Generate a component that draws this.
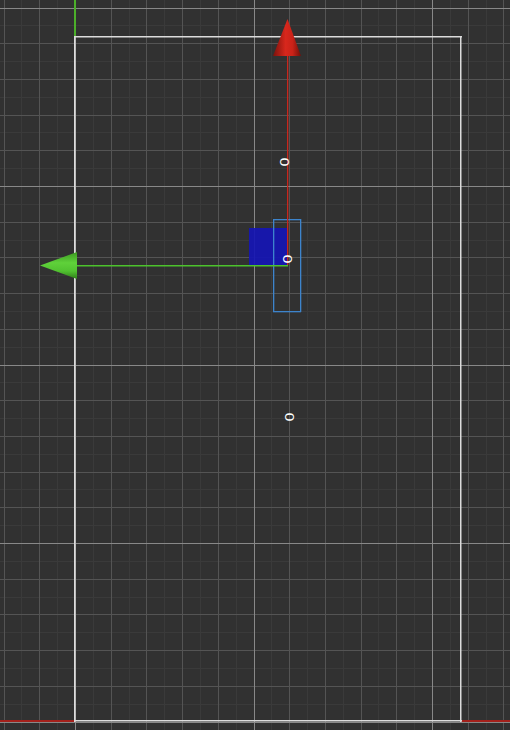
import React from 'react';

const W = 510;
const H = 730;
const STEP = 17.85;
const ORIGIN_X = 75;
const ORIGIN_Y = 7.5;

type GridLine = { pos: number; level: number };

// grid levels: 0 = faint, 1 = every second line, 2 = major (every tenth)
const buildLines = (origin: number, max: number): GridLine[] => {
  const lines: GridLine[] = [];
  const start = Math.ceil((0 - origin) / STEP);
  const end = Math.floor((max - origin) / STEP);
  for (let k = start; k <= end; k++) {
    const idx = ((k % 10) + 10) % 10;
    const level = idx === 0 ? 2 : idx % 2 === 0 ? 1 : 0;
    lines.push({ pos: Math.round(origin + k * STEP), level });
  }
  return lines;
};

const lineColors = ['#3a3a3a', '#545454', '#888888'];

const Label: React.FC<{ x: number; y: number }> = ({ x, y }) => (
  <text
    x={0}
    y={0}
    transform={`translate(${x} ${y}) rotate(-90) scale(1 0.8)`}
    textAnchor="middle"
    dominantBaseline="central"
    fontFamily="'DejaVu Sans', sans-serif"
    fontSize={15}
    fill="#ffffff"
  >
    0
  </text>
);

const Viewport: React.FC = () => {
  const vLines = buildLines(ORIGIN_X, W);
  const hLines = buildLines(ORIGIN_Y, H);

  return (
    <svg width={W} height={H} viewBox={`0 0 ${W} ${H}`} className="block">
      <defs>
        <linearGradient id="redCone" x1="0" y1="0" x2="1" y2="0">
          <stop offset="0" stopColor="#7a120c" />
          <stop offset="0.45" stopColor="#d8271c" />
          <stop offset="0.7" stopColor="#c92218" />
          <stop offset="1" stopColor="#6e100a" />
        </linearGradient>
        <linearGradient id="greenCone" x1="0" y1="0" x2="0" y2="1">
          <stop offset="0" stopColor="#3c9a22" />
          <stop offset="0.4" stopColor="#5fd13a" />
          <stop offset="0.7" stopColor="#52c231" />
          <stop offset="1" stopColor="#2f7c1a" />
        </linearGradient>
      </defs>

      {/* grid drawn as 1px rects; faint first, majors on top */}
      {[0, 1, 2].map(level => (
        <g key={level} fill={lineColors[level]}>
          {vLines.filter(l => l.level === level).map(l => (
            <rect key={`v${l.pos}`} x={l.pos} y={0} width={1} height={H} />
          ))}
          {hLines.filter(l => l.level === level).map(l => (
            <rect key={`h${l.pos}`} x={0} y={l.pos} width={W} height={1} />
          ))}
        </g>
      ))}

      {/* world axes */}
      <rect x={74} y={0} width={2} height={37} fill="#4caf2a" />
      <rect x={0} y={720} width={76} height={2} fill="#a3201b" />
      <rect x={460} y={720} width={50} height={2} fill="#a3201b" />

      {/* bounds */}
      <g fill="#dcdcdc">
        <rect x={74} y={36} width={388} height={1.5} />
        <rect x={74} y={720} width={388} height={1.5} />
        <rect x={74} y={36} width={1.6} height={686} />
        <rect x={460} y={36} width={1.5} height={686} />
      </g>

      {/* selected object */}
      <rect x={249} y={228} width={38} height={37} fill="#1515b4" fillOpacity={0.92} />
      <g fill="#3d84cc">
        <rect x={273} y={219} width={28} height={1.3} />
        <rect x={273} y={311} width={28} height={1.3} />
        <rect x={273} y={219} width={1.3} height={93} />
        <rect x={300} y={219} width={1.3} height={93} />
      </g>

      {/* gizmo */}
      <rect x={287} y={55} width={1.3} height={210} fill="#c8261d" />
      <polygon points="287.5,19 273,56 301,56" fill="url(#redCone)" />
      <rect x={76} y={265} width={212} height={1.5} fill="#4cc22c" />
      <polygon points="40,265.5 77,252 77,279" fill="url(#greenCone)" />

      <Label x={284.5} y={162} />
      <Label x={287.5} y={259} />
      <Label x={289.5} y={417} />
    </svg>
  );
};

export default function App() {
  return (
    <div className="w-[510px] h-[730px] bg-[#313131] overflow-hidden">
      <Viewport />
    </div>
  );
}
